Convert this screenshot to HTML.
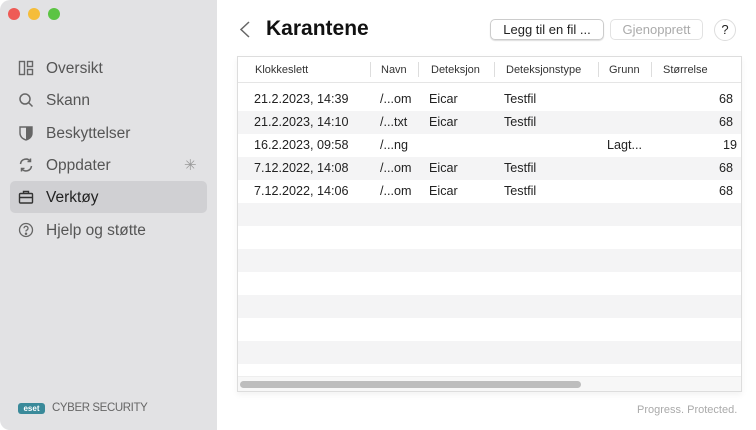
<!DOCTYPE html><html><head><style>
*{margin:0;padding:0;box-sizing:border-box}
body{width:756px;height:430px;overflow:hidden;background:#fff;font-family:"Liberation Sans",sans-serif;position:relative}
.sb{position:absolute;left:0;top:0;width:217px;height:430px;background:#e2e2e4;border-radius:10px 0 0 10px}
.dot{position:absolute;top:8px;width:12px;height:12px;border-radius:50%}
.nav{position:absolute;left:10px;width:197px;height:32px;font-size:15.5px;color:#555;line-height:33px;padding-left:36px}
.nav svg{position:absolute;left:8px;top:8px}
.sel{background:#d0d0d3;border-radius:5px;color:#222}
.t{position:absolute;font-size:12.6px;color:#222;white-space:nowrap}
.h{position:absolute;top:58px;height:25px;font-size:11px;color:#333;line-height:25px}
.sep{position:absolute;top:62px;width:1px;height:15px;background:#ddd}
.stripe{position:absolute;left:238px;width:503px;height:23px;background:#f4f4f5}
</style></head><body>
<div class="sb">
<div class="dot" style="left:8px;background:#ee5b56"></div>
<div class="dot" style="left:28px;background:#f5bd3a"></div>
<div class="dot" style="left:48px;background:#5cc443"></div>
<div class="nav" style="top:52px"><svg width="16" height="16" fill="none" stroke="#666" stroke-width="1.4"><rect x="1.5" y="1.5" width="5" height="13"/><rect x="9.5" y="1.5" width="5" height="5"/><rect x="9.5" y="9.5" width="5" height="5"/></svg>Oversikt</div>
<div class="nav" style="top:84px"><svg width="16" height="16" fill="none" stroke="#666" stroke-width="1.5"><circle cx="7" cy="7" r="5"/><path d="M10.5 10.5L14.5 14.5"/></svg>Skann</div>
<div class="nav" style="top:117px"><svg width="16" height="16"><path d="M2 2h12v6c0 4-3 6-6 7-3-1-6-3-6-7z" fill="none" stroke="#666" stroke-width="1.4"/><path d="M8 2h6v6c0 4-3 6-6 7z" fill="#666"/></svg>Beskyttelser</div>
<div class="nav" style="top:149px"><svg width="16" height="16" fill="none" stroke="#666" stroke-width="1.5"><path d="M2.5 7a5.5 5.5 0 0 1 10-2.5M13.5 9a5.5 5.5 0 0 1-10 2.5"/><path d="M12.5 1.5v3h-3M3.5 14.5v-3h3"/></svg>Oppdater<span style="position:absolute;left:174px;top:0;color:#999;font-size:15px">✳</span></div>
<div class="nav sel" style="top:181px"><svg width="16" height="16" fill="none" stroke="#333" stroke-width="1.4"><rect x="1.5" y="4.5" width="13" height="9.5" rx="1"/><path d="M5.5 4.5v-2h5v2M1.5 8.5h13"/></svg>Verktøy</div>
<div class="nav" style="top:214px"><svg width="16" height="16" fill="none" stroke="#666" stroke-width="1.3"><circle cx="8" cy="8" r="6.5"/><path d="M6 6.3a2 2 0 1 1 2.5 1.9c-.5.2-.5.6-.5 1.3"/><circle cx="8" cy="11.7" r=".6" fill="#666"/></svg>Hjelp og støtte</div>
<div style="position:absolute;left:18px;top:403px;width:27px;height:11px;background:#3a8a9a;border-radius:3px;color:#fff;font-size:8px;font-weight:bold;line-height:11px;text-align:center">eset</div>
<div style="position:absolute;left:52px;top:402px;font-size:11.5px;color:#666;letter-spacing:-0.4px">CYBER SECURITY</div>
</div>
<svg style="position:absolute;left:239px;top:21px" width="12" height="17" fill="none" stroke="#666" stroke-width="1.5"><path d="M10 1L2 8.5 10 16"/></svg>
<div class="t" style="left:266px;top:17px;font-size:21px;font-weight:bold;color:#111">Karantene</div>
<div style="position:absolute;left:490px;top:19px;width:114px;height:21px;border:1px solid #ccc;border-radius:5px;font-size:13px;line-height:19px;text-align:center;color:#222;box-shadow:0 1px 1px #ddd">Legg til en fil ...</div>
<div style="position:absolute;left:610px;top:19px;width:93px;height:21px;border:1px solid #e2e2e2;border-radius:5px;font-size:13px;line-height:19px;text-align:center;color:#aaa">Gjenopprett</div>
<div style="position:absolute;left:714px;top:19px;width:22px;height:22px;border:1px solid #ddd;border-radius:50%;font-size:13px;line-height:20px;text-align:center;color:#222">?</div>
<div style="position:absolute;left:237px;top:56px;width:505px;height:336px;border:1px solid #ddd;box-shadow:0 3px 6px rgba(0,0,0,.05)"></div>
<div style="position:absolute;left:238px;top:82px;width:503px;height:1px;background:#e5e5e5"></div>
<div class="h" style="left:255px">Klokkeslett</div><div class="sep" style="left:370px"></div>
<div class="h" style="left:381px">Navn</div><div class="sep" style="left:418px"></div>
<div class="h" style="left:431px">Deteksjon</div><div class="sep" style="left:494px"></div>
<div class="h" style="left:506px">Deteksjonstype</div><div class="sep" style="left:598px"></div>
<div class="h" style="left:609px">Grunn</div><div class="sep" style="left:651px"></div>
<div class="h" style="left:663px">Størrelse</div>
<div class="stripe" style="top:111px"></div><div class="stripe" style="top:157px"></div><div class="stripe" style="top:203px"></div><div class="stripe" style="top:249px"></div><div class="stripe" style="top:295px"></div><div class="stripe" style="top:341px"></div>
<div style="position:absolute;left:238px;top:376px;width:503px;height:15px;background:#f7f7f7;border-top:1px solid #eee"></div>
<div style="position:absolute;left:240px;top:381px;width:341px;height:7px;background:#bdbdbd;border-radius:4px"></div>
<div class="t" style="left:254px;top:92px">21.2.2023, 14:39</div><div class="t" style="left:380px;top:92px">/...om</div><div class="t" style="left:429px;top:92px">Eicar</div><div class="t" style="left:504px;top:92px">Testfil</div><div class="t" style="left:719px;top:92px">68</div>
<div class="t" style="left:254px;top:115px">21.2.2023, 14:10</div><div class="t" style="left:380px;top:115px">/...txt</div><div class="t" style="left:429px;top:115px">Eicar</div><div class="t" style="left:504px;top:115px">Testfil</div><div class="t" style="left:719px;top:115px">68</div>
<div class="t" style="left:254px;top:138px">16.2.2023, 09:58</div><div class="t" style="left:380px;top:138px">/...ng</div><div class="t" style="left:607px;top:138px">Lagt...</div><div class="t" style="left:723px;top:138px">19</div>
<div class="t" style="left:254px;top:161px">7.12.2022, 14:08</div><div class="t" style="left:380px;top:161px">/...om</div><div class="t" style="left:429px;top:161px">Eicar</div><div class="t" style="left:504px;top:161px">Testfil</div><div class="t" style="left:719px;top:161px">68</div>
<div class="t" style="left:254px;top:184px">7.12.2022, 14:06</div><div class="t" style="left:380px;top:184px">/...om</div><div class="t" style="left:429px;top:184px">Eicar</div><div class="t" style="left:504px;top:184px">Testfil</div><div class="t" style="left:719px;top:184px">68</div>
<div class="t" style="left:637px;top:404px;font-size:11px;color:#aaa">Progress. Protected.</div>
</body></html>
